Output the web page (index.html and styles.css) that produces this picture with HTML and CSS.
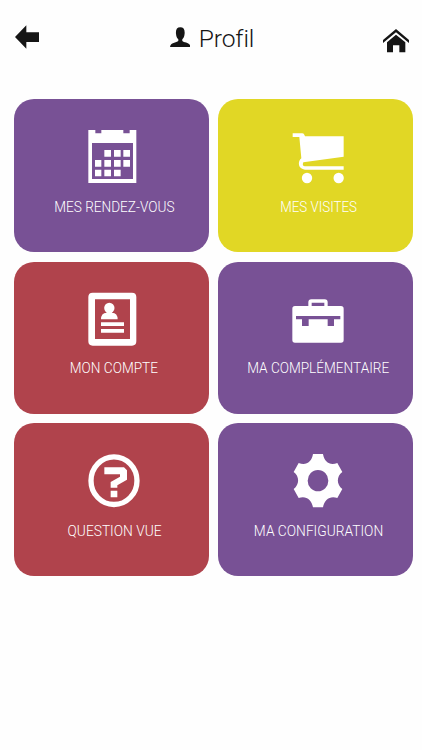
FILE: index.html
```
<!DOCTYPE html>
<html lang="fr">
<head>
<meta charset="utf-8">
<title>Profil</title>
<link rel="stylesheet" href="styles.css">
</head>
<body>
<header class="bar">
  <svg class="back" viewBox="0 0 72 72" aria-hidden="true"><path d="M0 36 34 1V22H72V51H34V71Z"/></svg>
  <h1 class="title">
    <svg class="user" viewBox="0 0 62 62" aria-hidden="true"><path d="M31 1C41 1 45 8 44 20C43 30 40 34 37 37V42C43 48 62 45 62 62H0C0 45 19 48 25 42V37C22 34 19 30 18 20C17 8 21 1 31 1Z"/></svg>
    <span class="title-text">Profil</span>
  </h1>
  <svg class="home" viewBox="0 0 78 72" aria-hidden="true"><path d="M39 0 78 33V42L39 10 0 42V33Z"/><path d="M39 17 67 40V70H49V49H30V70H12V40Z"/></svg>
</header>
<main class="grid">
  <a class="card purple">
    <svg class="icon" viewBox="225 90 175 185" aria-hidden="true"><path fill-rule="evenodd" d="M235 105H256V115H274V105H340V115H359V105H379V264H235ZM246 144V252H369V144Z"/><path d="M283 165h20v20h-20zM312 165h20v20h-20zM340 165h20v20h-20zM255 195h19v20h-19zM283 195h20v20h-20zM312 195h20v20h-20zM340 195h20v20h-20zM255 224h19v20h-19zM283 224h20v20h-20zM312 224h20v20h-20z"/></svg>
    <span class="label">MES RENDEZ-VOUS</span>
  </a>
  <a class="card yellow">
    <svg class="icon" viewBox="225 90 175 185" aria-hidden="true"><path fill-rule="evenodd" d="M236 115H264Q269 115 271 119L273 124H389V185L268 202Q263 213 273 214H389V224H273C252 223 250 199 262 190L256 126H236Z"/><circle cx="279" cy="249" r="15.5"/><circle cx="374" cy="249" r="15.5"/></svg>
    <span class="label visites">MES VISITES</span>
  </a>
  <a class="card red middle">
    <svg class="icon" viewBox="225 90 175 185" aria-hidden="true"><path fill-rule="evenodd" d="M248 107H366Q379 107 379 120V253Q379 266 366 266H248Q235 266 235 253V120Q235 107 248 107ZM255 127V246H360V127Z"/><circle cx="298" cy="153" r="15.5"/><path d="M290 160H306V167Q323 168 323 187H273Q273 168 290 167ZM273 196h69v11h-69zM273 216h69v11h-69z"/></svg>
    <span class="label">MON COMPTE</span>
  </a>
  <a class="card purple middle">
    <svg class="icon" viewBox="225 90 175 185" aria-hidden="true"><path fill-rule="evenodd" d="M283 147V136Q283 127 292 127H332Q341 127 341 136V147H381Q389 147 389 155V249Q389 257 381 257H243Q235 257 235 249V155Q235 147 243 147ZM293 137V147H331V137ZM246 177V187H264V207H284V187H341V207H360V187H379V177Z"/></svg>
    <span class="label">MA COMPLÉMENTAIRE</span>
  </a>
  <a class="card red bottom">
    <svg class="icon" viewBox="225 90 175 185" aria-hidden="true"><ellipse class="ring" cx="312" cy="182" rx="69" ry="71.5"/><path d="M283 142H342L351 151V179L322 196V203H302V186L330 170V163H283ZM302 212h20v20h-20z"/></svg>
    <span class="label wide">QUESTION VUE</span>
  </a>
  <a class="card purple bottom">
    <svg class="icon" viewBox="225 90 175 185" aria-hidden="true"><path fill-rule="evenodd" d="M297 102H327C331 126 348 138 370 129L385 156C367 169 367 194 385 207L370 234C349 226 331 238 327 262H297C293 238 275 226 254 234L239 207C257 194 257 169 239 156L254 129C276 138 293 126 297 102ZM312 150A31 32 0 1 0 312 214A31 32 0 1 0 312 150Z"/></svg>
    <span class="label wide">MA CONFIGURATION</span>
  </a>
</main>
</body>
</html>
```
FILE: styles.css
```
* { box-sizing: border-box; }
body {
  margin: 0;
  min-height: 750px;
  background: #fefefe;
  color: #151515;
  font-family: Roboto, "Open Sans", sans-serif;
  font-weight: 300;
}
svg { display: block; fill: currentColor; flex: none; }
.bar {
  display: flex;
  align-items: flex-start;
  justify-content: space-between;
  height: 99.4px;
  padding: 0 12.5px 0 15.3px;
}
.back { width: 24px; height: 24px; margin-top: 25px; }
.home { width: 26px; height: 24px; margin-top: 28.7px; }
.title {
  display: flex;
  width: 84px;
  margin: 23px 0 0 1px;
  font-size: 24.6px;
  font-weight: 300;
  line-height: 31px;
  white-space: nowrap;
}
.user { width: 20.6px; height: 20.6px; margin: 3.7px 8.2px 0 0; }
.title-text { font-variant-ligatures: none; letter-spacing: -0.1px; }
.grid {
  display: grid;
  grid-template-columns: 194.7px 194.7px;
  grid-template-rows: 152.8px 151.5px 153px;
  gap: 9.9px 9.3px;
  padding-left: 14.3px;
}
.card {
  display: flex;
  flex-direction: column;
  align-items: center;
  padding: 25.5px 0 0 5px;
  border-radius: 20px;
  color: #fff;
}
.middle { padding-top: 24.9px; }
.bottom { padding-top: 26.5px; }
.purple { background: #785195; }
.yellow { background: #e1d725; }
.red { background: #b0434c; }
.icon { width: 58.33px; height: 61.67px; }
.ring { fill: none; stroke: currentColor; stroke-width: 16; }
.label {
  margin-top: 10.4px;
  font-size: 14.8px;
  line-height: 20px;
  white-space: nowrap;
  transform: scaleX(0.92);
}
.visites { transform: scaleX(0.9); }
.wide { transform: scaleX(0.93); }
.middle .label, .bottom .label { margin-top: 9.1px; }
```
